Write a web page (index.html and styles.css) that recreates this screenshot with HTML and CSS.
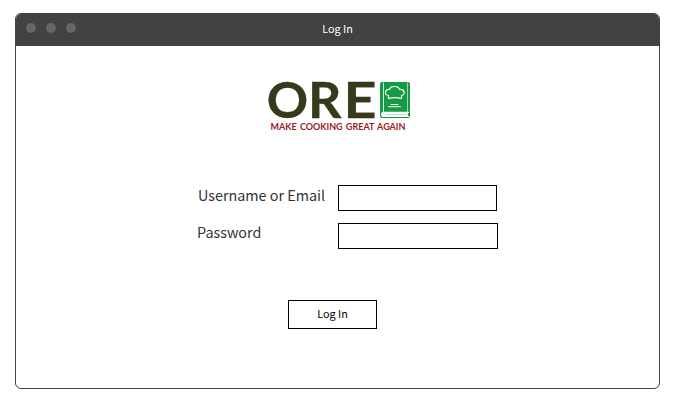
FILE: index.html
```html
<!DOCTYPE html>
<html lang="en">
<head>
<meta charset="utf-8">
<title>Log In</title>
<link rel="stylesheet" href="styles.css">
</head>
<body>
<main class="window">
  <header class="titlebar">
    <div class="dots"><i></i><i></i><i></i></div>
    <h1 class="title">Log In</h1>
  </header>
  <svg class="logo" width="146" height="54" viewBox="266 80 146 54" role="img">
    <text class="brand" y="117.800"><tspan x="266.700" textLength="41.400" lengthAdjust="spacingAndGlyphs">O</tspan><tspan x="308" textLength="33.500" lengthAdjust="spacingAndGlyphs">R</tspan><tspan x="343.400" textLength="33" lengthAdjust="spacingAndGlyphs">E</tspan></text>
    <text class="tagline" x="270.5" y="130.1" textLength="135" lengthAdjust="spacingAndGlyphs">MAKE COOKING GREAT AGAIN</text>
    <rect x="380" y="82" width="30" height="36" rx="2" fill="#169b45"/>
    <g fill="none" stroke="#fff" stroke-linecap="round" stroke-linejoin="round">
      <path d="M383.5 83V111.500" stroke-width=".8"/>
      <path d="M407.500 83V111.500" stroke-width=".6"/>
      <path d="M388.500 98.500V95.500C384.500 95 384 89 389.500 89.500C390.500 85.500 398.500 85.500 399.500 89.500C405 89 405.500 95 401.500 95.500V98.500M388.500 98.500Q395 96.800 401.500 98.500" stroke-width="1.200"/>
      <path d="M391 104.500H398M388.500 106.700H400.500" stroke-width="1"/>
    </g>
    <path d="M383 111.700H409V113H408V116H409V117H383Q381 117 381 114.500T383 111.700Z" fill="#fff"/>
    <path d="M386 114.500H407" stroke="#8fcfa5" stroke-width=".7"/>
  </svg>
  <form class="form">
    <div class="row">
      <label class="label" for="user">Username or Email</label>
      <input class="field" id="user" type="text">
    </div>
    <div class="row">
      <label class="label label-password" for="pass">Password</label>
      <input class="field field-password" id="pass" type="password">
    </div>
    <button class="submit" type="button">Log In</button>
  </form>
</main>
</body>
</html>
```
FILE: styles.css
```css
* { box-sizing: border-box; }
body {
  margin: 0;
  padding: 13px 18px 0 15px;
  background: #fff;
  font-family: "Noto Sans CJK SC", "Open Sans", sans-serif;
}
.window {
  width: 645px;
  height: 376px;
  border: 1px solid #424242;
  border-radius: 6px;
  overflow: hidden;
}
.titlebar {
  display: grid;
  grid-template-columns: 1fr auto 1fr;
  align-items: center;
  height: 32px;
  padding: 0 10px;
  background: #424242;
}
.dots { display: flex; gap: 10px; padding: 0 0 4px .4px; }
.dots i { width: 10px; height: 10px; border-radius: 50%; background: #666; }
.title { margin: 0; padding-bottom: 4px; font-size: 10.8px; line-height: 16px; font-weight: 400; color: #fff; }
.logo { display: block; margin: 34px 0 0 250px; overflow: visible; }
.brand { font: 700 49.500px Lato, sans-serif; fill: #363a1b; stroke: #363a1b; stroke-width: .3px; }
.tagline { font: 700 8.800px Lato, sans-serif; word-spacing: 1px; fill: #9c1c1f; }
.form { margin: 51px 0 0 182px; }
.row { display: flex; height: 26px; margin-bottom: 12px; }
.label { width: 140px; font-size: 14.35px; line-height: 20px; color: #333; white-space: nowrap; }
.label-password { margin-left: -1px; width: 141px; line-height: 18px; }
.field {
  width: 159px;
  height: 26px;
  padding: 0 6px;
  border: 1px solid #000;
  border-radius: 0;
  background: #fff;
  font: inherit;
}
.field-password { width: 160px; }
.submit {
  display: block;
  width: 89px;
  height: 29px;
  margin: 51px 0 0 90px;
  padding: 0 0 4px;
  border: 1px solid #000;
  background: #fff;
  color: #000;
  font-family: inherit;
  font-size: 10.8px;
}
```
